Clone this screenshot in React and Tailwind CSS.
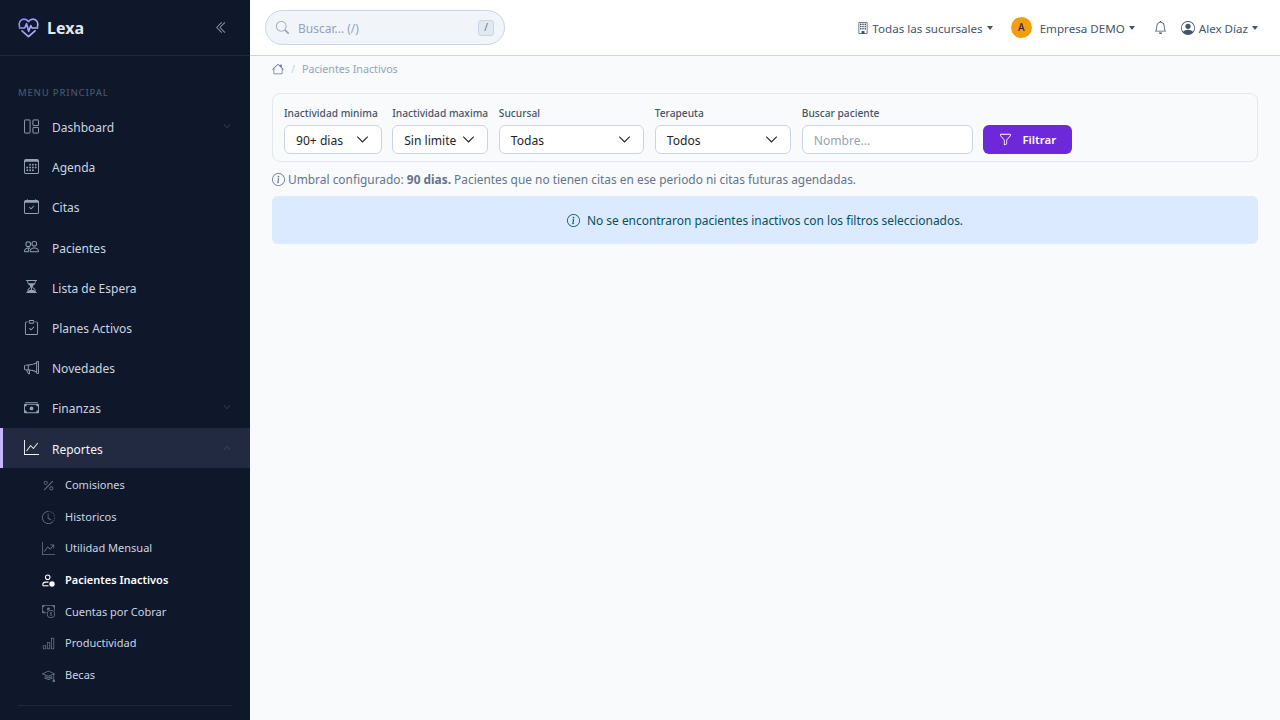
import React from "react";
import {
  BsBell,
  BsBarChart,
  BsBuilding,
  BsCalendar3,
  BsCalendarCheck,
  BsCashCoin,
  BsCashStack,
  BsChevronDoubleLeft,
  BsChevronDown,
  BsChevronUp,
  BsClipboardCheck,
  BsClockHistory,
  BsFunnel,
  BsGraphUp,
  BsGraphUpArrow,
  BsHourglassSplit,
  BsHouse,
  BsInfoCircle,
  BsMegaphone,
  BsMortarboard,
  BsPeople,
  BsPercent,
  BsPersonCircle,
  BsSearch,
} from "react-icons/bs";

const DashIcon = ({ className }) => (
  <svg viewBox="0 0 16 16" fill="none" stroke="currentColor" strokeWidth="1" className={className}>
    <rect x="0.5" y="1" width="6" height="14" rx="0.5" />
    <rect x="9.5" y="1" width="6" height="6" rx="0.5" />
    <rect x="9.5" y="9" width="6" height="6" rx="0.5" />
  </svg>
);

const InactiveIcon = ({ className }) => (
  <svg viewBox="0 0 16 16" fill="none" stroke="currentColor" strokeWidth="1.3" className={className}>
    <circle cx="7" cy="4" r="2.8" />
    <path d="M1 14.5v-1.3c0-2 1.6-3.2 3.5-3.2h3.5" />
    <path d="M1 14.5h7" />
    <circle cx="12.3" cy="12.3" r="3.3" fill="currentColor" stroke="none" />
  </svg>
);

const Logo = () => (
  <svg viewBox="0 0 24 24" fill="none" strokeWidth="1.7" strokeLinecap="round" strokeLinejoin="round" className="h-[23px] w-[23px]">
    <defs>
      <linearGradient id="lexaLogo" gradientUnits="userSpaceOnUse" x1="2" y1="4" x2="22" y2="20">
        <stop offset="0" stopColor="#818cf8" />
        <stop offset="1" stopColor="#c4b5fd" />
      </linearGradient>
    </defs>
    <g stroke="url(#lexaLogo)">
      <path d="M2.6 11C1.4 7 3.6 3.2 7.2 3.2c2.1 0 3.7 1 4.8 2.7 1.1-1.7 2.7-2.7 4.8-2.7 3.6 0 5.8 3.8 4.6 7.8" />
      <path d="M2.5 12.5H8l2-4.5 2.2 8 2.2-6 1.2 2.5h6" />
      <path d="M5.2 15.5 12 21.5l6.8-6" />
    </g>
  </svg>
);

const mainItems = [
  { label: "Dashboard", icon: DashIcon, chevron: "down" },
  { label: "Agenda", icon: BsCalendar3 },
  { label: "Citas", icon: BsCalendarCheck },
  { label: "Pacientes", icon: BsPeople },
  { label: "Lista de Espera", icon: BsHourglassSplit },
  { label: "Planes Activos", icon: BsClipboardCheck },
  { label: "Novedades", icon: BsMegaphone },
  { label: "Finanzas", icon: BsCashStack, chevron: "down" },
];

const subItems = [
  { label: "Comisiones", icon: BsPercent },
  { label: "Historicos", icon: BsClockHistory },
  { label: "Utilidad Mensual", icon: BsGraphUpArrow },
  { label: "Pacientes Inactivos", icon: InactiveIcon, active: true },
  { label: "Cuentas por Cobrar", icon: BsCashCoin },
  { label: "Productividad", icon: BsBarChart },
  { label: "Becas", icon: BsMortarboard },
];

const Caret = () => (
  <span className="ml-[4px] inline-block border-x-[3.5px] border-t-[4px] border-x-transparent border-t-[#475569]"></span>
);

const Select = ({ label, value, width }) => (
  <div className={`flex flex-col ${width}`}>
    <label className="mb-[3px] text-[10.2px] leading-[18px] font-medium whitespace-nowrap text-[#475569]">
      {label}
    </label>
    <div className="flex h-[29px] items-center justify-between rounded-md border border-[#cbd5e1] bg-white pr-[12px] pl-[11px] text-[12.1px] text-[#212529]">
      <span className="pt-[3px]">{value}</span>
      <BsChevronDown className="text-[13px]" strokeWidth={0.6} />
    </div>
  </div>
);

const Sidebar = () => (
  <aside className="flex h-screen w-[250px] shrink-0 flex-col overflow-hidden bg-[#0f172a]">
    <div className="flex h-[56px] shrink-0 items-center justify-between border-b border-[#1e293b] pr-[22px] pl-[17px]">
      <div className="flex items-center gap-[7px]">
        <Logo />
        <span className="text-[16px] font-bold text-[#e2e8f0]">Lexa</span>
      </div>
      <BsChevronDoubleLeft className="text-[13px] text-[#94a3b8]" />
    </div>
    <div className="pt-[30px] pb-[6px] pl-[18px] text-[9.5px] leading-[14px] font-medium tracking-[0.8px] text-[#475569]">
      MENU PRINCIPAL
    </div>
    <nav className="flex flex-col">
      {mainItems.map((item) => (
        <div
          key={item.label}
          className="flex h-[40.2px] items-center pr-[19px] pl-[24px] text-[12px] text-[#cbd5e1]"
        >
          <item.icon className="h-[15px] w-[15px] shrink-0 text-[#94a3b8]" />
          <span className="ml-[13px] flex-1 pt-[4px]">{item.label}</span>
          {item.chevron && <BsChevronDown className="text-[8px] text-[#475569]" />}
        </div>
      ))}
      <div className="flex h-[40.2px] items-center border-l-[3px] border-[#c4b5fd] bg-[#222a41] pr-[19px] pl-[21px] text-[12px] text-[#f1f5f9]">
        <BsGraphUp className="h-[15px] w-[15px] shrink-0" />
        <span className="ml-[13px] flex-1 pt-[4px]">Reportes</span>
        <BsChevronUp className="text-[8px] text-[#475569]" />
      </div>
    </nav>
    <div className="flex flex-col pt-[2px]">
      {subItems.map((item) => (
        <div
          key={item.label}
          className={`flex h-[31.6px] items-center pl-[42px] text-[11px] ${
            item.active ? "font-semibold text-white" : "text-[#cbd5e1]"
          }`}
        >
          <item.icon
            className={`h-[13px] w-[13px] shrink-0 ${
              item.active ? "text-white" : "text-[#64748b]"
            }`}
          />
          <span className="ml-[10px]">{item.label}</span>
        </div>
      ))}
    </div>
    <div className="mx-[18px] mt-[14px] border-t border-[#1e293b]"></div>
  </aside>
);

const Topbar = () => (
  <header className="flex h-[56px] shrink-0 items-center justify-between border-b border-[#cbd5e1] bg-white pr-[22px] pl-[15px]">
    <div className="flex h-[35px] w-[240px] items-center rounded-full border border-[#cbd5e1] bg-[#f1f5f9] pr-[10px] pl-[10px]">
      <BsSearch className="text-[13px] text-[#94a3b8]" />
      <span className="ml-[9px] flex-1 pt-[2px] text-[12px] text-[#94a3b8]">Buscar... (/)</span>
      <span className="flex h-[16px] w-[16px] items-center justify-center rounded-[3px] border border-[#cbd5e1] bg-[#e2e8f0] text-[10px] text-[#64748b]">
        /
      </span>
    </div>
    <div className="flex items-center text-[11.6px] text-[#475569]">
      <BsBuilding className="text-[12px]" />
      <span className="ml-[3px] pt-[2px]">Todas las sucursales</span>
      <Caret />
      <span className="ml-[18px] flex h-[21px] w-[21px] items-center justify-center rounded-full bg-[#f59e0b] text-[10px] font-medium text-[#1e293b]">
        A
      </span>
      <span className="ml-[8px] pt-[2px]">Empresa DEMO</span>
      <Caret />
      <BsBell className="ml-[19px] text-[13px]" />
      <BsPersonCircle className="ml-[14px] text-[14px]" />
      <span className="ml-[4px] pt-[2px]">Alex Díaz</span>
      <Caret />
    </div>
  </header>
);

const App = () => (
  <div className="flex h-screen overflow-hidden bg-[#f8fafc] font-['Noto_Sans',sans-serif]">
    <Sidebar />
    <div className="flex min-w-0 flex-1 flex-col">
      <Topbar />
      <main className="flex flex-col px-[22px]">
        <div className="flex h-[26px] items-center text-[10.7px] text-[#94a3b8]">
          <BsHouse className="text-[12px] text-[#64748b]" />
          <span className="mx-[7px] text-[#cbd5e1]">/</span>
          <span>Pacientes Inactivos</span>
        </div>
        <div className="mt-[11px] flex h-[69px] items-end gap-[10.6px] rounded-lg border border-[#e2e8f0] px-[11px] pb-[7px]">
          <Select label="Inactividad minima" value="90+ dias" width="w-[97.6px]" />
          <Select label="Inactividad maxima" value="Sin limite" width="w-[96px]" />
          <Select label="Sucursal" value="Todas" width="w-[145.4px]" />
          <Select label="Terapeuta" value="Todos" width="w-[136.4px]" />
          <div className="flex w-[171px] flex-col">
            <label className="mb-[3px] text-[10.2px] leading-[18px] font-medium text-[#475569]">
              Buscar paciente
            </label>
            <div className="flex h-[29px] items-center rounded-md border border-[#cbd5e1] bg-white pl-[11px] text-[12.1px] text-[#94a3b8]">
              <span className="pt-[3px]">Nombre...</span>
            </div>
          </div>
          <button className="flex h-[29px] w-[89px] items-center justify-center gap-[10px] rounded-md bg-[#6d28d9] text-[11.5px] font-semibold text-white">
            <BsFunnel className="text-[13px]" />
            <span>Filtrar</span>
          </button>
        </div>
        <div className="mt-[8px] flex h-[18px] items-center text-[11.9px] text-[#64748b]">
          <BsInfoCircle className="mr-[3px] text-[13px]" />
          <span className="pt-[2px]">
            Umbral configurado: <b className="font-bold">90 dias.</b> Pacientes que no tienen citas
            en ese periodo ni citas futuras agendadas.
          </span>
        </div>
        <div className="mt-[8px] flex h-[48px] items-center justify-center rounded-md bg-[#dbeafe] text-[11.95px] text-[#055160]">
          <BsInfoCircle className="mr-[7px] text-[13px]" />
          <span className="pt-[2px]">
            No se encontraron pacientes inactivos con los filtros seleccionados.
          </span>
        </div>
      </main>
    </div>
  </div>
);

export default App;
